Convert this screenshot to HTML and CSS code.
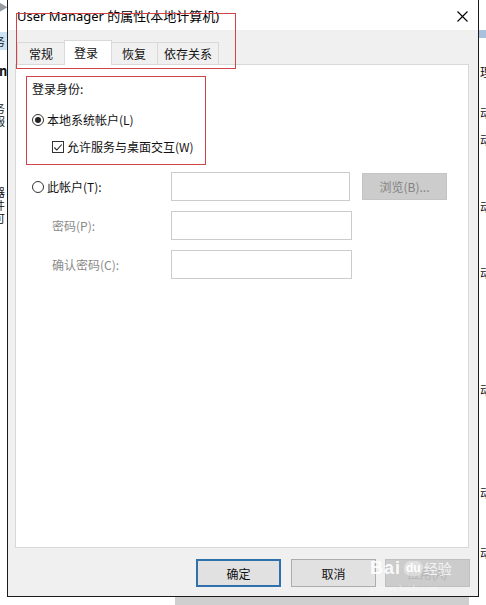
FILE: index.html
```html
<!DOCTYPE html>
<html lang="zh-CN">
<head>
    <meta charset="UTF-8">
    <title>User Manager 的属性(本地计算机)</title>
    <link rel="stylesheet" href="styles.css">
</head>
<body>
    <div class="screen">
        <div class="desk-left">
            <div class="arrow">▶</div>
            <div class="sel-bar"><span class="peek">务</span></div>
            <div class="peek bold n-line">n</div>
            <div class="peek-group g1">
                <span class="peek">务</span>
                <span class="peek">服</span>
            </div>
            <div class="peek-group g2">
                <span class="peek">器</span>
                <span class="peek">件</span>
                <span class="peek">可</span>
            </div>
        </div>

        <div class="dialog">
            <div class="titlebar">
                <span class="title">User Manager 的属性(本地计算机)</span>
                <svg class="close" width="11" height="11" viewBox="0 0 11 11">
                    <path d="M0.5 0.5 L10.5 10.5 M10.5 0.5 L0.5 10.5" stroke="#000" stroke-width="1.1" fill="none"/>
                </svg>
            </div>

            <div class="tabs">
                <div class="tab">常规</div>
                <div class="tab active">登录</div>
                <div class="tab">恢复</div>
                <div class="tab tab-wide">依存关系</div>
            </div>

            <div class="panel">
                <div class="group-label">登录身份:</div>
                <div class="option local">
                    <span class="radio checked"></span>本地系统帐户(L)
                </div>
                <div class="option interact">
                    <span class="checkbox">
                        <svg width="11" height="11" viewBox="0 0 11 11">
                            <path d="M1.5 5.5 L4.2 8.3 L9.6 2.2" stroke="#222" stroke-width="1.2" fill="none"/>
                        </svg>
                    </span>允许服务与桌面交互(W)
                </div>

                <div class="account-grid">
                    <div class="option"><span class="radio"></span>此帐户(T):</div>
                    <div class="field"></div>
                    <div class="btn browse">浏览(B)...</div>

                    <div class="field-label">密码(P):</div>
                    <div class="field wide"></div>
                    <div></div>

                    <div class="field-label">确认密码(C):</div>
                    <div class="field wide"></div>
                    <div></div>
                </div>

                <div class="mark mark-logon"></div>
            </div>

            <div class="footer">
                <div class="btn default">确定</div>
                <div class="btn">取消</div>
                <div class="btn disabled">应用(A)</div>

                <div class="watermark">
                    <div class="wm-row">
                        <span class="wm-bai">Bai</span>
                        <span class="wm-paw">du</span>
                        <span class="wm-jy">经验</span>
                    </div>
                    <div class="wm-url">jingyan.baidu.com</div>
                </div>
            </div>

            <div class="mark mark-tabs"></div>
        </div>

        <div class="desk-right">
            <div class="sel-bar-r"></div>
            <span class="peek-r r1">理</span>
            <span class="peek-r r2">动</span>
            <span class="peek-r r3">动</span>
            <span class="peek-r r4">动</span>
            <span class="peek-r r5">动</span>
            <span class="peek-r r6">动</span>
            <span class="peek-r r7">动</span>
            <span class="peek-r r8">动</span>
        </div>
    </div>
    <div class="desk-bottom">
        <div class="bottom-white"></div>
        <div class="bottom-gray"></div>
    </div>
</body>
</html>
```

FILE: styles.css
```css
* {
    margin: 0;
    padding: 0;
    box-sizing: border-box;
}

body {
    width: 486px;
    height: 605px;
    overflow: hidden;
    background: #fff;
    font-family: "Noto Sans", "Noto Sans CJK SC", sans-serif;
    font-size: 12px;
    color: #111;
}

.screen {
    display: flex;
    height: 597px;
}

/* window behind the dialog */
.desk-left {
    width: 7px;
    overflow: hidden;
    font-family: "Noto Sans CJK SC", sans-serif;
}

.arrow {
    height: 14px;
    font-size: 10px;
    line-height: 14px;
    color: #9c9c9c;
    margin-left: -2px;
}

.sel-bar {
    margin-top: 18px;
    height: 18px;
    background: #cde3f4;
    line-height: 18px;
    overflow: hidden;
}

.peek {
    display: block;
    margin-left: -6px;
    height: 13px;
    line-height: 13px;
    font-size: 11px;
    white-space: nowrap;
}

.sel-bar .peek {
    height: 18px;
    line-height: 18px;
}

.bold {
    font-weight: 700;
    font-size: 13px;
}

.n-line {
    margin-top: 14px;
    margin-left: -1px;
    height: 14px;
}

.g1 { margin-top: 24px; }
.g2 { margin-top: 58px; }

.desk-right {
    width: 7px;
    display: flex;
    flex-direction: column;
    overflow: hidden;
    font-family: "Noto Sans CJK SC", sans-serif;
}

.sel-bar-r {
    margin-top: 30px;
    height: 8px;
    background: #a9c1dc;
}

.peek-r {
    display: block;
    height: 14px;
    line-height: 14px;
    font-size: 12px;
    margin-left: 1px;
    white-space: nowrap;
}

.r1 { margin-top: 27px; }
.r2 { margin-top: 27px; }
.r3 { margin-top: 13px; }
.r4 { margin-top: 53px; }
.r5 { margin-top: 52px; }
.r6 { margin-top: 103px; }
.r7 { margin-top: 89px; }
.r8 { margin-top: 46px; }

.desk-bottom {
    display: flex;
    height: 8px;
}

.bottom-white { width: 175px; }

.bottom-gray {
    width: 294px;
    background: #cfcfcf;
}

/* dialog */
.dialog {
    position: relative;
    width: 472px;
    display: flex;
    flex-direction: column;
    background: #f0f0f0;
    border: 1px solid #1b1b1b;
    border-top: none;
}

.titlebar {
    height: 30px;
    background: #fff;
    display: flex;
    align-items: center;
    justify-content: space-between;
    padding: 2px 10px 0 9px;
}

.title {
    font-size: 13px;
    line-height: 16px;
    color: #000;
}

.close {
    margin-top: 1px;
}

.tabs {
    height: 34px;
    display: flex;
    align-items: flex-end;
    padding-left: 9px;
}

.tab {
    height: 22px;
    line-height: 21px;
    padding: 0 11px;
    border: 1px solid #d9d9d9;
    border-bottom: none;
    border-left: none;
    background: #f0f0f0;
    font-family: "Noto Sans CJK SC", sans-serif;
    color: #111;
}

.tab:first-child {
    border-left: 1px solid #d9d9d9;
}

.tab.active {
    height: 25px;
    line-height: 23px;
    padding: 0 13px 0 9px;
    margin: 0 -1px -1px -1px;
    background: #fff;
    border-left: 1px solid #d9d9d9;
    position: relative;
    z-index: 1;
}

.tab-wide {
    padding: 0 6px;
}

.panel {
    position: relative;
    height: 484px;
    margin: 0 9px 0 7px;
    background: #fff;
    border: 1px solid #d9d9d9;
    padding: 16px 0 0 16px;
    font-family: "Noto Sans CJK SC", sans-serif;
}

.group-label {
    height: 16px;
    line-height: 16px;
}

.option {
    display: flex;
    align-items: center;
    height: 16px;
    line-height: 16px;
    white-space: nowrap;
}

.local {
    margin-top: 15px;
}

.interact {
    margin-top: 11px;
    padding-left: 20px;
}

.radio {
    width: 12px;
    height: 12px;
    border: 1px solid #333;
    border-radius: 50%;
    margin-right: 3px;
    display: flex;
    align-items: center;
    justify-content: center;
}

.radio.checked::after {
    content: "";
    width: 6px;
    height: 6px;
    border-radius: 50%;
    background: #222;
}

.checkbox {
    width: 12px;
    height: 12px;
    border: 1px solid #333;
    margin-right: 3px;
    display: flex;
    align-items: center;
    justify-content: center;
}

.account-grid {
    display: grid;
    grid-template-columns: 139px 181px 85px;
    grid-auto-rows: 29px;
    row-gap: 10px;
    align-items: center;
    margin-top: 17px;
}

.field {
    width: 179px;
    height: 29px;
    border: 1px solid #cccccc;
    background: #fff;
}

.field.wide {
    width: 181px;
}

.field-label {
    padding-left: 20px;
    color: #8a8a8a;
}

.btn {
    height: 28px;
    width: 85px;
    display: flex;
    align-items: center;
    justify-content: center;
    background: #e1e1e1;
    border: 1px solid #adadad;
    color: #111;
    font-family: "Noto Sans CJK SC", sans-serif;
}

.browse {
    height: 27px;
    margin-left: 10px;
    background: #cccccc;
    border-color: #c4c4c4;
    color: #838383;
}

.footer {
    position: relative;
    flex: 1;
    display: flex;
    justify-content: flex-end;
    gap: 10px;
    padding: 11px 8px 0 0;
}

.footer .btn:nth-child(2) {
    margin-right: -1px;
}

.btn.default {
    border: 2px solid #2f71ac;
}

.btn.disabled {
    background: #cccccc;
    border-color: #bfbfbf;
    color: #b4b4b4;
}

/* red annotation frames */
.mark {
    position: absolute;
    border: 1px solid #cf434b;
    pointer-events: none;
}

.mark-tabs {
    left: 8px;
    top: 13px;
    width: 220px;
    height: 56px;
}

.mark-logon {
    left: 10px;
    top: 11px;
    width: 180px;
    height: 89px;
}

/* site watermark */
.watermark {
    position: absolute;
    left: 362px;
    top: 10px;
    width: 90px;
    color: rgba(255, 255, 255, 0.9);
    white-space: nowrap;
}

.wm-row {
    display: flex;
    align-items: center;
    height: 20px;
}

.wm-bai {
    font-family: "Liberation Sans", sans-serif;
    font-size: 18px;
    font-weight: 700;
    letter-spacing: 1px;
}

.wm-paw {
    margin-left: 3px;
    padding: 0 2px;
    font-family: "Liberation Sans", sans-serif;
    font-size: 12px;
    font-weight: 700;
    color: #fff;
    background: rgba(255, 255, 255, 0.4);
    border-radius: 7px;
    line-height: 15px;
}

.wm-jy {
    margin-left: 1px;
    font-size: 14px;
    font-family: "Noto Sans CJK SC", sans-serif;
    color: rgba(255, 255, 255, 0.8);
}

.wm-url {
    margin-top: 6px;
    font-family: "Liberation Serif", serif;
    font-size: 9px;
    line-height: 9px;
    color: rgba(255, 255, 255, 0.55);
}
```
